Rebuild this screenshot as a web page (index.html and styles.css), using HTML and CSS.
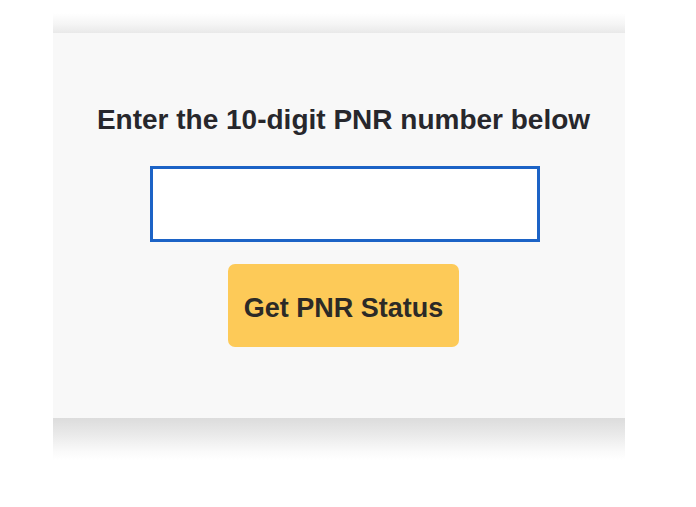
FILE: index.html
```html
<!DOCTYPE html>
<html lang="en">
<head>
<meta charset="utf-8">
<title>PNR Status</title>
<link rel="stylesheet" href="styles.css">
</head>
<body>
<div class="page">
  <div class="frame">
    <div class="shade-top"></div>
    <div class="panel">
      <h2 class="title">Enter the 10-digit PNR number below</h2>
      <input class="pnr-input" type="text" aria-label="PNR number">
      <button class="submit" type="button">Get PNR Status</button>
    </div>
    <div class="shade-bottom"></div>
  </div>
</div>
</body>
</html>
```
FILE: styles.css
```css
html, body {
  margin: 0;
  padding: 0;
  background: #ffffff;
}
.page {
  width: 696px;
  height: 507px;
  padding-top: 13px;
  box-sizing: border-box;
  font-family: "Liberation Sans", Arial, sans-serif;
}
.frame {
  margin-left: 53px;
  width: 572px;
}
.shade-top {
  height: 20px;
  background: linear-gradient(to bottom, #ffffff, #f5f5f5 55%, #e9e9e9);
}
.panel {
  height: 385px;
  background: #f8f8f8;
  box-sizing: border-box;
  padding: 71px 0 0 9px;
  display: flex;
  flex-direction: column;
  align-items: center;
}
.title {
  margin: 0;
  font-size: 28px;
  line-height: 32px;
  font-weight: bold;
  color: #27272c;
}
.pnr-input {
  margin: 30px 0 0 3px;
  width: 390px;
  height: 76px;
  box-sizing: border-box;
  border: 3px solid #1c63c6;
  background: #ffffff;
  outline: none;
  padding: 0 10px;
}
.submit {
  margin-top: 22px;
  width: 231px;
  height: 83px;
  border: none;
  border-radius: 7px;
  background: #fdca58;
  color: #2c2a27;
  font-family: "Liberation Sans", Arial, sans-serif;
  font-size: 27px;
  font-weight: bold;
  padding: 6px 0 0;
}
.shade-bottom {
  height: 42px;
  background: linear-gradient(to bottom, #dcdcdc, #eaeaea 40%, #fafafa 80%, #ffffff);
}
```
